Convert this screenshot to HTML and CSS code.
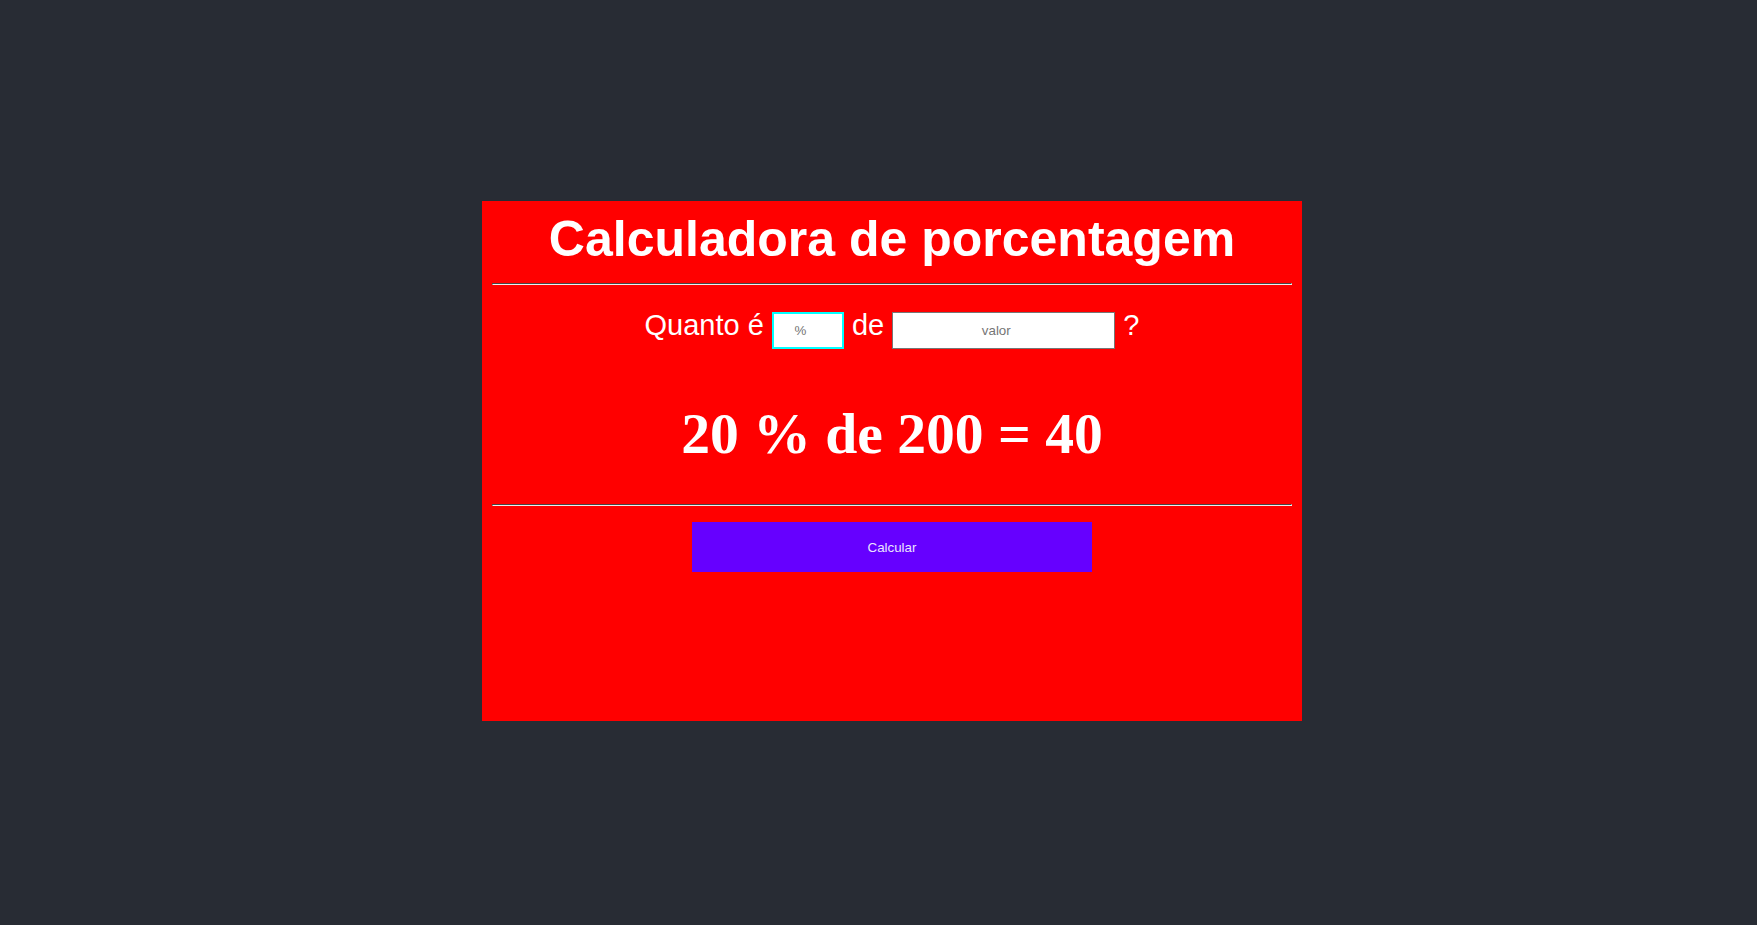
FILE: index.html
```html
<!DOCTYPE html>
<html lang="pt-BR">
<head>
<meta charset="utf-8">
<title>Calculadora de porcentagem</title>
<link rel="stylesheet" href="styles.css">
</head>
<body>
<main class="page">
  <section class="card">
    <h1 class="title">Calculadora de porcentagem</h1>
    <hr class="rule rule-top">
    <div class="question">
      Quanto é <input class="field field-pct" type="number" placeholder="%"> de <input class="field field-value" type="number" placeholder="valor"> ?
    </div>
    <div class="result">20 % de 200 = 40</div>
    <hr class="rule rule-bottom">
    <button class="calc-btn" type="button">Calcular</button>
  </section>
</main>
</body>
</html>
```
FILE: styles.css
```css
html, body {
  margin: 0;
  padding: 0;
}
body {
  background: #282c34;
}
.page {
  min-height: 100vh;
  box-sizing: border-box;
  display: flex;
  align-items: center;
  justify-content: center;
  padding-left: 27px;
  padding-bottom: 3px;
}
.card {
  width: 820px;
  height: 520px;
  box-sizing: border-box;
  padding: 10px;
  background: #ff0000;
  color: #ffffff;
  text-align: center;
  font-family: "Liberation Sans", Arial, sans-serif;
}
.title {
  margin: 0;
  font-size: 50px;
  font-weight: bold;
  line-height: 57px;
}
.rule {
  margin: 0;
  border: 1px inset #eeeeee;
  border-top-color: #9a9a9a;
  border-left-color: #9a9a9a;
  height: 0;
}
.rule-top {
  margin-top: 15px;
}
.question {
  margin-top: 24px;
  font-size: 29px;
}
.field {
  font-family: "Liberation Sans", Arial, sans-serif;
  font-size: 13.33px;
  padding: 10px;
  border: 1px solid #767676;
  text-align: center;
  background: #ffffff;
  color: #000;
  outline: none;
}
.field-pct {
  width: 50px;
  border-color: #00ffff;
  box-shadow: inset 0 0 0 1px #00ffff;
}
.field-value {
  width: 201px;
}
.result {
  margin-top: 52px;
  font-family: "Liberation Serif", "Times New Roman", serif;
  font-weight: bold;
  font-size: 57.6px;
}
.rule-bottom {
  margin-top: 38px;
}
.calc-btn {
  display: block;
  margin: 16px auto 0;
  width: 400px;
  height: 50px;
  border: none;
  background: #6600ff;
  color: #ebe3ff;
  font-family: "Liberation Sans", Arial, sans-serif;
  font-size: 13.33px;
}
```
